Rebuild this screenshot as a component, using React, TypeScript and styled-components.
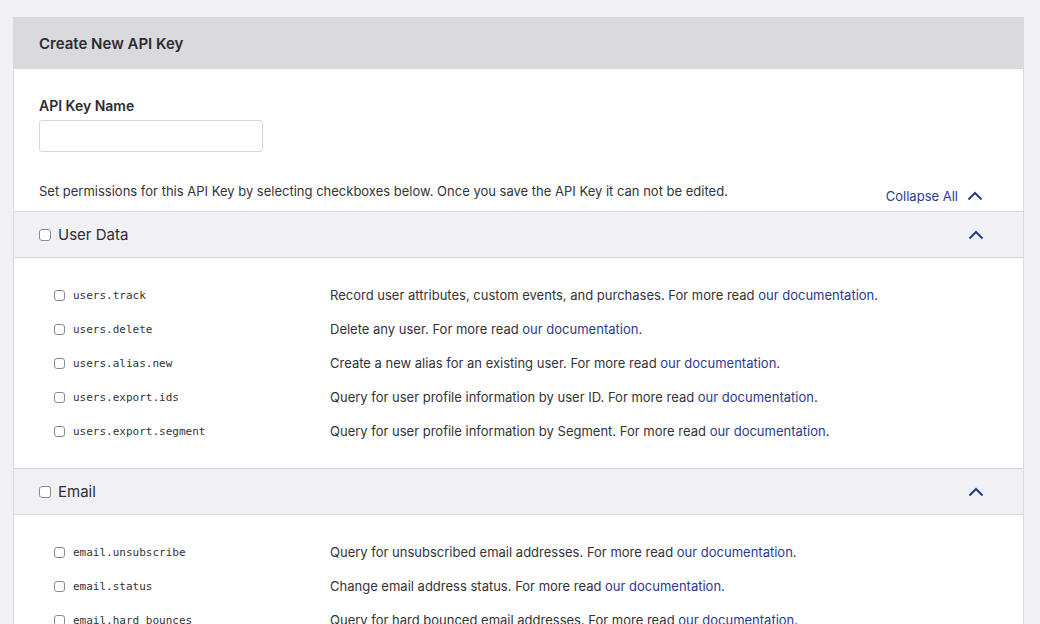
import React from "react";
import styled, { createGlobalStyle } from "styled-components";

const Global = createGlobalStyle`
  html, body { margin: 0; padding: 0; background: #f0f0f5; }
  body { font-family: Inter, "Noto Sans", sans-serif; color: #333338; }
  * { box-sizing: border-box; }
`;

const Page = styled.div`
  padding: 17px 16px 0 13px;
  height: 624px;
  overflow: hidden;
`;

const Card = styled.div`
  background: #fff;
  border: 1px solid #d9d9de;
  border-bottom: none;
  border-radius: 3px 3px 0 0;
`;

const CardHeader = styled.div`
  height: 52px;
  background: #d9d9de;
  display: flex;
  align-items: center;
  padding: 0 26px;
  font-size: 15px;
  font-weight: 600;
  color: #2c2c31;
  margin: -1px -1px 0 -1px;
`;

const Intro = styled.div`
  padding: 28px 25px 0 25px;
`;

const Label = styled.div`
  font-size: 14px;
  font-weight: 600;
  color: #2c2c31;
  line-height: 18px;
  margin-bottom: 5px;
`;

const TextInput = styled.input`
  display: block;
  width: 224px;
  height: 32px;
  border: 1px solid #d6d6dc;
  border-radius: 3px;
  background: #fff;
  outline: none;
`;

const InfoRow = styled.div`
  display: flex;
  justify-content: space-between;
  align-items: flex-start;
  margin-top: 30px;
  padding-right: 15px;
  height: 29px;
`;

const InfoText = styled.div`
  font-size: 13px;
  line-height: 18px;
  color: #333338;
`;

const CollapseAll = styled.button`
  display: flex;
  align-items: center;
  gap: 9px;
  border: none;
  background: none;
  padding: 0;
  margin-top: 5px;
  font-family: inherit;
  font-size: 13px;
  line-height: 18px;
  color: #2c3a8e;
  cursor: pointer;
`;

const Section = styled.div``;

const SectionHeader = styled.div`
  height: 47px;
  display: flex;
  align-items: center;
  background: #f0f0f5;
  border-top: 1px solid #d6d6dc;
  border-bottom: 1px solid #d6d6dc;
  padding: 0 39px 0 25px;
`;

const SectionTitle = styled.label`
  flex: 1;
  display: flex;
  align-items: center;
  gap: 7px;
  font-size: 15px;
  color: #2c2c31;
`;

const Box = styled.span<{ $size: number }>`
  display: inline-block;
  width: ${(p) => p.$size}px;
  height: ${(p) => p.$size}px;
  border: 1px solid #8a8a90;
  border-radius: 3px;
  background: #fff;
  flex: none;
`;

const SectionBody = styled.div`
  padding: 20px 0;
`;

const PermRow = styled.div`
  height: 34px;
  display: grid;
  grid-template-columns: 276px 1fr;
  align-items: center;
  padding-left: 40px;
`;

const PermName = styled.label`
  display: flex;
  align-items: center;
  gap: 8px;
  font-family: "DejaVu Sans Mono", monospace;
  font-size: 11px;
  color: #333338;
`;

const PermDesc = styled.div`
  font-size: 13px;
  color: #333338;
`;

const DocLink = styled.a`
  color: #2c3a8e;
  text-decoration: none;
`;

const Chevron = () => (
  <svg width="16" height="10" viewBox="0 0 16 10" fill="none">
    <path d="M1.5 8.5L8 2L14.5 8.5" stroke="#2c3a8e" strokeWidth="2" />
  </svg>
);

type Perm = { name: string; desc: string };

const sections: { title: string; perms: Perm[] }[] = [
  {
    title: "User Data",
    perms: [
      { name: "users.track", desc: "Record user attributes, custom events, and purchases." },
      { name: "users.delete", desc: "Delete any user." },
      { name: "users.alias.new", desc: "Create a new alias for an existing user." },
      { name: "users.export.ids", desc: "Query for user profile information by user ID." },
      { name: "users.export.segment", desc: "Query for user profile information by Segment." },
    ],
  },
  {
    title: "Email",
    perms: [
      { name: "email.unsubscribe", desc: "Query for unsubscribed email addresses." },
      { name: "email.status", desc: "Change email address status." },
      { name: "email.hard_bounces", desc: "Query for hard bounced email addresses." },
    ],
  },
];

export default function App() {
  return (
    <>
      <Global />
      <Page>
        <Card>
          <CardHeader>Create New API Key</CardHeader>
          <Intro>
            <Label>API Key Name</Label>
            <TextInput type="text" />
            <InfoRow>
              <InfoText>
                Set permissions for this API Key by selecting checkboxes below. Once you save the API Key it can not be edited.
              </InfoText>
              <CollapseAll>
                Collapse All <Chevron />
              </CollapseAll>
            </InfoRow>
          </Intro>
          {sections.map((s) => (
            <Section key={s.title}>
              <SectionHeader>
                <SectionTitle>
                  <Box $size={12} />
                  {s.title}
                </SectionTitle>
                <Chevron />
              </SectionHeader>
              <SectionBody>
                {s.perms.map((p) => (
                  <PermRow key={p.name}>
                    <PermName>
                      <Box $size={11} />
                      {p.name}
                    </PermName>
                    <PermDesc>
                      {p.desc} For more read <DocLink href="#">our documentation</DocLink>.
                    </PermDesc>
                  </PermRow>
                ))}
              </SectionBody>
            </Section>
          ))}
        </Card>
      </Page>
    </>
  );
}
